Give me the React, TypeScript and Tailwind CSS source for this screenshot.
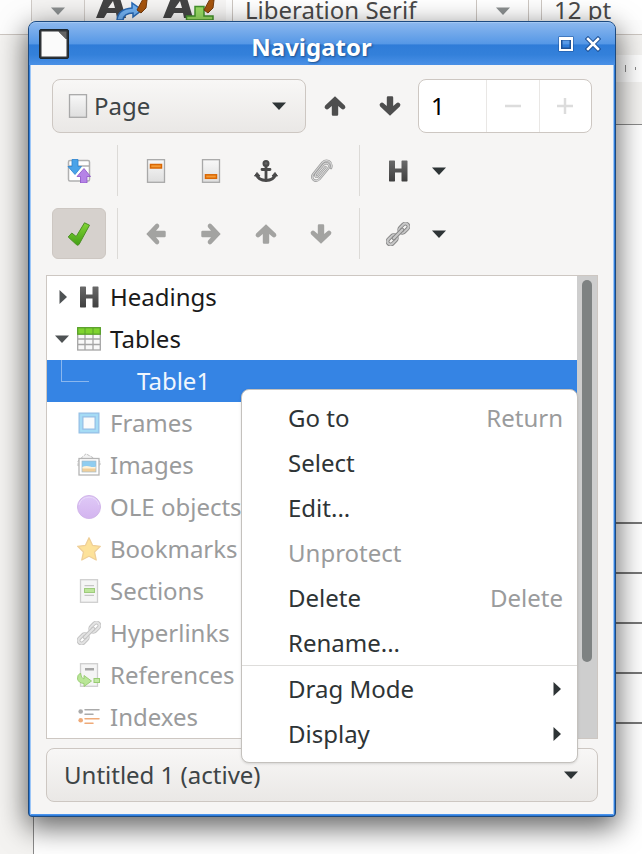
import React from "react";

type IconProps = { className?: string };

const dark = "#4a4a4a";

function CaretDown({ className = "" }: IconProps) {
  return (
    <svg viewBox="0 0 14 8" className={`h-2 w-[14px] shrink-0 ${className}`} aria-hidden="true">
      <path d="M0 0.5H14L7 8Z" fill="currentColor" />
    </svg>
  );
}

function CaretRight({ className = "" }: IconProps) {
  return (
    <svg viewBox="0 0 8 14" className={`h-[14px] w-2 shrink-0 ${className}`} aria-hidden="true">
      <path d="M0.5 0V14L8 7Z" fill="currentColor" />
    </svg>
  );
}

function Svg({ children, className = "" }: { children: React.ReactNode; className?: string }) {
  return (
    <svg viewBox="0 0 24 24" className={`size-6 shrink-0 ${className}`} fill="none" aria-hidden="true">
      {children}
    </svg>
  );
}

function Arrow({ className = "" }: IconProps) {
  return (
    <Svg className={className}>
      <path
        d="M12 2.300L21.800 11.500Q23.300 13.200 21.600 14.800Q20 16 18.400 14.800L15.200 12V20.500Q15.200 21.700 14 21.700H10Q8.800 21.700 8.800 20.500V12L5.600 14.800Q4 16 2.400 14.800Q0.700 13.200 2.200 11.500Z"
        fill="currentColor"
      />
    </Svg>
  );
}

function HeadingIcon() {
  return (
    <Svg>
      <defs>
        <linearGradient id="heading" x2="0" y2="1">
          <stop stopColor="#6a6a6a" />
          <stop offset="1" stopColor="#3f3f3f" />
        </linearGradient>
      </defs>
      <path
        d="M3.5 1.5H8.5L9 2V9.5H15.500V2L16 1.500H21L21.500 2V22L21 22.500H16L15.500 22V13.500H9V22L8.500 22.500H3.500L3 22V2Z"
        fill="url(#heading)"
      />
    </Svg>
  );
}

function AnchorIcon() {
  return (
    <Svg>
      <circle cx="12" cy="4.500" r="2.500" stroke={dark} strokeWidth="2" fill="#666" />
      <path d="M12 7V21M8 10.500H16" stroke={dark} strokeWidth="2.800" strokeLinecap="round" />
      <path d="M2.500 15.500Q4.500 21.300 12 21.500Q19.500 21.300 21.500 15.500" stroke={dark} strokeWidth="3" />
      <path d="M0.500 17L3 13.500L6 17ZM23.500 17L21 13.500L18 17Z" fill={dark} stroke={dark} strokeLinejoin="round" />
    </Svg>
  );
}

function ClipIcon() {
  const path = "M16.500 8L9 17Q8 18.500 6.800 17.500Q5.800 16.500 6.800 15L14.500 5.500Q17 3.200 19.200 5Q21.300 7 19.200 9.500L10.500 20Q7.500 23 4.500 20.700Q2 18.200 4.300 15L13.500 3.500Q16.500 0.500 20 2.300Q23.500 4.500 22 9";
  return (
    <Svg>
      <path d={path} stroke="#9a9a9a" strokeWidth="2.400" strokeLinecap="round" strokeLinejoin="round" />
      <path d={path} stroke="#d6d6d6" strokeWidth="1.100" strokeLinecap="round" strokeLinejoin="round" />
    </Svg>
  );
}

function ChainIcon({ className = "" }: IconProps) {
  return (
    <Svg className={className}>
      <g transform="rotate(-45 12 12)">
        <g stroke="#848484" strokeWidth="3.800">
          <rect x="-1.500" y="9" width="10.500" height="6" rx="3" />
          <rect x="15" y="9" width="10.500" height="6" rx="3" />
        </g>
        <g stroke="#c8c8c8" strokeWidth="2">
          <rect x="-1.500" y="9" width="10.500" height="6" rx="3" />
          <rect x="15" y="9" width="10.500" height="6" rx="3" />
        </g>
        <path d="M6 12H18" stroke="#848484" strokeWidth="4" strokeLinecap="round" />
        <path d="M6 12H18" stroke="#c8c8c8" strokeWidth="2.200" strokeLinecap="round" />
      </g>
    </Svg>
  );
}

function ContentViewIcon() {
  return (
    <Svg>
      <rect x="1.500" y="1.500" width="21" height="20.500" rx="1.500" fill="#fff" stroke="#b0b0b0" strokeWidth="1.500" />
      <path d="M2 7H22" stroke="#a5a5a5" strokeWidth="1.300" />
      <path d="M5 0.500H11V7.500H14.500L8 15.500L1 7.500H5Z" fill="#4aa3e8" stroke="#2b83cf" strokeWidth="0.800" />
      <path d="M13.500 24V17.500H10L17 9.500L23.500 17.500H20V24Z" fill="#b583e6" stroke="#8c50c4" strokeWidth="0.800" />
    </Svg>
  );
}

function PageIcon({ mark }: { mark?: "header" | "footer" }) {
  return (
    <Svg>
      <defs>
        <linearGradient id="sheet" x2="0" y2="1">
          <stop stopColor="#f8f8f8" />
          <stop offset="1" stopColor="#dedede" />
        </linearGradient>
      </defs>
      <rect x="3.500" y="0.700" width="17" height="22.600" fill="url(#sheet)" stroke="#a8a8a8" strokeWidth="1.300" />
      {mark && (
        <rect
          x="6.500"
          y={mark === "header" ? 5.5 : 15.8}
          width="11"
          height="3.500"
          fill="#f59a34"
          stroke="#d96704"
          strokeWidth="1.500"
        />
      )}
    </Svg>
  );
}

function CheckIcon() {
  return (
    <Svg>
      <defs>
        <linearGradient id="check" x2="0" y2="1">
          <stop stopColor="#83d435" />
          <stop offset="1" stopColor="#43a015" />
        </linearGradient>
      </defs>
      <path
        d="M17.500 0.800L22.500 3.200L12 22.500Q10.500 24 9.300 22.500L1.200 15L4.800 11L9.200 14.500Z"
        fill="url(#check)"
        stroke="#4c8f24"
        strokeWidth="1"
        strokeLinejoin="round"
      />
    </Svg>
  );
}

function TableIcon() {
  return (
    <Svg>
      <rect x="0.700" y="1" width="22.600" height="22" fill="#f8f8f8" stroke="#a5a5a5" strokeWidth="1.300" />
      <path d="M1 12H23M1 17.500H23M8 7V23M16 7V23" stroke="#a5a5a5" strokeWidth="1.300" />
      <rect x="0.700" y="0.700" width="22.600" height="6.500" fill="#80d330" stroke="#59a02a" strokeWidth="1.300" />
      <path d="M8 1V7M16 1V7" stroke="#59a02a" />
    </Svg>
  );
}

function FrameIcon() {
  return (
    <Svg>
      <rect x="4" y="4" width="16" height="16" fill="#fbfbfb" stroke="#a2cdf0" strokeWidth="4" />
      <rect x="2" y="2" width="20" height="20" stroke="#93bfe4" />
      <rect x="4" y="4" width="16" height="16" stroke="#a7e0f6" strokeWidth="1.500" />
      <rect x="6" y="6" width="12" height="12" stroke="#93bfe4" />
    </Svg>
  );
}

function ImageIcon() {
  return (
    <Svg>
      <path d="M1 8L9 0.800L23 8.500V12L1 13Z" fill="#f3f3f3" stroke="#c0c0c0" strokeDasharray="3 1" />
      <rect x="2" y="5.500" width="20" height="16.500" fill="#fff" stroke="#b5b5b5" strokeWidth="1.300" />
      <rect x="5" y="8" width="14" height="11" fill="#8fcdf0" />
      <path d="M5 14Q9 12.500 13 13.500Q16 14.500 19 13.500V16H5Z" fill="#fff3da" />
      <path d="M5 15.500H19V19H5Z" fill="#f0cf9b" />
      <rect x="5" y="8" width="14" height="11" stroke="#a3bac8" strokeWidth="0.700" />
    </Svg>
  );
}

function OleIcon() {
  return (
    <Svg>
      <defs>
        <linearGradient id="ole" x2="0" y2="1">
          <stop stopColor="#dfc9f7" />
          <stop offset="1" stopColor="#d3b4ef" />
        </linearGradient>
      </defs>
      <circle cx="12" cy="12" r="11.500" fill="url(#ole)" stroke="#d1b5e9" />
      <path d="M2 10Q4 2.500 12 2.200Q20 2.500 22 10" stroke="#e8d9fa" />
    </Svg>
  );
}

function StarIcon() {
  return (
    <Svg>
      <path
        d="M12 0.800L15.500 8.300L23.300 9.300L17.500 15L19.200 23L12 19.200L4.800 23L6.500 15L0.700 9.300L8.500 8.300Z"
        fill="#fde29a"
        stroke="#efcf98"
        strokeWidth="1.300"
        strokeLinejoin="round"
      />
    </Svg>
  );
}

function SectionIcon() {
  return (
    <Svg>
      <rect x="3.500" y="0.700" width="17" height="22.600" fill="#f5f5f5" stroke="#cfcfcf" strokeWidth="1.300" />
      <path d="M7.500 6.700H17M7.500 16.300H17" stroke="#bbb" />
      <rect x="7.500" y="9.500" width="10" height="4" fill="#bce59a" stroke="#9ecb7d" />
    </Svg>
  );
}

function ReferenceIcon() {
  return (
    <Svg>
      <rect x="3.500" y="0.700" width="17" height="22.600" fill="#f5f5f5" stroke="#cfcfcf" strokeWidth="1.300" />
      <rect x="8" y="5" width="9" height="2.500" fill="#a5a5a5" />
      <path
        d="M3.500 10Q0 12 0.500 16Q1.500 20 7 20.500V23.500L14.500 18L7 12.500V16Q4 15 4 12Z"
        fill="#b9e697"
        stroke="#96c96f"
        strokeWidth="0.900"
        strokeLinejoin="round"
      />
      <rect x="17" y="15.500" width="5.500" height="4" fill="#c2e8a4" stroke="#98cb73" />
    </Svg>
  );
}

function IndexIcon() {
  return (
    <Svg>
      <circle cx="3.700" cy="6.500" r="2.300" fill="#aaa" />
      <circle cx="3.700" cy="15.300" r="2.300" fill="#efaa78" />
      <path d="M8 4.800H22M8 9.300H16" stroke="#aaa" strokeWidth="1.500" strokeLinecap="round" />
      <path d="M8 13.700H22M8 18.300H16" stroke="#efaa78" strokeWidth="1.500" strokeLinecap="round" />
    </Svg>
  );
}

function DocumentLogo() {
  return (
    <svg viewBox="0 0 30 30" className="size-[30px] shrink-0" aria-hidden="true">
      <rect x="0.500" y="0.500" width="29" height="29" rx="1.500" fill="#303438" stroke="#1c2730" />
      <path d="M2.500 2.500H19.500L27.500 10.500V27.500H2.500Z" fill="#fbfbfb" />
      <path d="M19.500 2.500L27.500 10.500V2.500Z" fill="#666" />
    </svg>
  );
}

function StyleIcon({ kind }: { kind: "update" | "new" }) {
  return (
    <svg viewBox="0 0 54 20" className="h-5 w-[54px] shrink-0" aria-hidden="true">
      <path d="M0 18L8 -2H24L30 18H21L20 13H11L8 18ZM12 8H19L17 1Z" fill="#444" />
      {kind === "update" ? (
        <path d="M21 20Q22 9 36 8V3L46 10L37 17V13Q28 13 27 20Z" fill="#72b2f3" stroke="#2869b5" strokeWidth="1.500" />
      ) : (
        <path d="M23.500 20V16H32V6.500H41V16H50V20Z" fill="#98dc63" stroke="#43912b" strokeWidth="1.500" />
      )}
      <path d="M47 -1L51 0L50 8L45 13L41 10Z" fill="#a6540d" stroke="#743b0d" />
    </svg>
  );
}

function ToolButton({ label, children, className = "", disabled }: {
  label: string;
  children: React.ReactNode;
  className?: string;
  disabled?: boolean;
}) {
  return (
    <button
      type="button"
      aria-label={label}
      disabled={disabled}
      className={`flex h-[51px] w-[54px] shrink-0 items-center justify-center rounded-md text-[#4e4e4e] disabled:text-[#a3a3a1] ${className}`}
    >
      {children}
    </button>
  );
}

function Separator() {
  return <div className="mx-[10px] w-px self-stretch bg-[#dcdad7]" />;
}

const lists = [
  { name: "Frames", icon: <FrameIcon /> },
  { name: "Images", icon: <ImageIcon /> },
  { name: "OLE objects", icon: <OleIcon /> },
  { name: "Bookmarks", icon: <StarIcon /> },
  { name: "Sections", icon: <SectionIcon /> },
  { name: "Hyperlinks", icon: <ChainIcon className="opacity-50" /> },
  { name: "References", icon: <ReferenceIcon /> },
  { name: "Indexes", icon: <IndexIcon /> },
];

const actions = [
  { name: "Go to", hint: "Return" },
  { name: "Select" },
  { name: "Edit..." },
  { name: "Unprotect", disabled: true },
  { name: "Delete", hint: "Delete" },
  { name: "Rename..." },
];

function DocumentWindow() {
  return (
    <div className="flex h-full flex-col bg-[#f4f3f1]">
      <div className="flex h-[35px] shrink-0 items-start border-b border-[#cdc7c2] bg-[#fdfdfd] pl-[31px]">
        <button
          type="button"
          aria-label="Paragraph style list"
          className="flex h-[21px] w-[54px] shrink-0 items-center justify-center border-x border-[#d0cbc7] bg-[#f4f3f2] text-[#8b8f90]"
        >
          <CaretDown />
        </button>
        <div className="flex h-[21px] shrink-0 gap-[13px] bg-[#f6f5f4] pl-[11px] pr-[9px]">
          <StyleIcon kind="update" />
          <StyleIcon kind="new" />
        </div>
        <div className="ml-[6px] flex h-[21px] w-[297px] shrink-0 border-x border-[#cdc7c2] bg-white">
          <input
            aria-label="Font name"
            defaultValue="Liberation Serif"
            className="h-5 min-w-0 flex-1 bg-transparent pl-3 text-[#4a4a4a] outline-none"
          />
          <button
            type="button"
            aria-label="Font list"
            className="flex w-[52px] items-center justify-center border-l border-[#cdc7c2] text-[#8b8f90]"
          >
            <CaretDown />
          </button>
        </div>
        <input
          aria-label="Font size"
          defaultValue="12 pt"
          className="ml-3 h-5 min-w-0 flex-1 border-l border-[#cdc7c2] bg-white pl-3 text-[#4a4a4a] outline-none"
        />
      </div>
      <div className="ml-[33px] mt-5 flex h-[27px] shrink-0 items-center justify-end gap-[9px] bg-white pr-[6px]">
        <span className="h-[7px] w-px bg-[#8a8a8a]" />
        <span className="h-[3px] w-px bg-[#8a8a8a]" />
      </div>
      <div className="ml-[33px] mt-[42px] flex-1 border-l border-t border-[#8a8a8a] bg-white pt-[397px]">
        <div className="border-t-2 border-[#777]">
          {[0, 1, 2, 3].map((row) => (
            <div key={row} className="h-[50px] border-b-2 border-[#777]" />
          ))}
        </div>
      </div>
    </div>
  );
}

function ContextMenu() {
  return (
    <div
      role="menu"
      className="absolute bottom-[53px] right-[37px] w-[337px] rounded-lg border border-[#c4c1bd] bg-white pb-1.5 pt-[5px] text-[#2e3436] shadow-sm"
    >
      {actions.map((item) => (
        <button
          key={item.name}
          type="button"
          role="menuitem"
          disabled={item.disabled}
          className="flex h-[45px] w-full items-center justify-between pl-[46px] pr-[14px] disabled:text-[#9a9b9c]"
        >
          <span>{item.name}</span>
          {item.hint && <span className="text-[#9a9b9c]">{item.hint}</span>}
        </button>
      ))}
      <div className="h-px bg-[#dedddb]" />
      {["Drag Mode", "Display"].map((name) => (
        <button
          key={name}
          type="button"
          role="menuitem"
          className="flex h-[45px] w-full items-center justify-between pl-[46px] pr-4"
        >
          <span>{name}</span>
          <CaretRight />
        </button>
      ))}
    </div>
  );
}

function Navigator() {
  return (
    <section
      aria-label="Navigator"
      className="absolute left-7 right-[26px] top-[21px] rounded-t-lg rounded-b-sm border border-[#1d4a80] bg-[#2f7cd8] shadow-[0_9px_28px_2px_rgba(0,0,0,0.6)]"
    >
      <header className="flex h-[43px] items-center rounded-t-[7px] border-t border-[#a3c8f3] bg-[linear-gradient(#8ab7ee,#5597e6_50%,#2f7cd8_52%,#3380da_75%,#4a90e6)] px-[10px]">
        <DocumentLogo />
        <h1 className="flex-1 pt-1.5 text-center font-bold text-white [text-shadow:1px_1px_2px_#1d4f8c]">Navigator</h1>
        <button type="button" aria-label="Maximize" className="mr-[3px] flex size-6 items-center justify-center">
          <svg viewBox="0 0 16 16" className="size-4" fill="none" aria-hidden="true">
            <rect x="2.500" y="2.500" width="11" height="11" stroke="#1d5095" strokeWidth="4" />
            <path d="M2 2H14V14H2Z" stroke="#fff" strokeWidth="2" />
            <path d="M2 3H14" stroke="#fff" strokeWidth="2" />
          </svg>
        </button>
        <button type="button" aria-label="Close" className="flex size-6 items-center justify-center">
          <svg viewBox="0 0 16 16" className="size-4" fill="none" strokeLinecap="square" aria-hidden="true">
            <path d="M3 3L13 13M13 3L3 13" stroke="#1d5095" strokeWidth="4.500" />
            <path d="M3 3L13 13M13 3L3 13" stroke="#fff" strokeWidth="2.500" />
          </svg>
        </button>
      </header>

      <div className="mx-px mb-px border border-t-0 border-[#9cc6f7] border-b-[#4a93ec] bg-[#f6f5f4] px-[15px] pb-3 pt-[14px]">
        <div className="flex items-center gap-px px-[6px]">
          <div className="relative mr-px flex-1">
            <select
              aria-label="Navigate by"
              className="h-[54px] w-full appearance-none rounded-lg border border-[#cdc7c2] bg-linear-to-b from-[#f8f7f6] to-[#eae8e6] pl-[41px] text-[#3d4446]"
            >
              <option>Page</option>
            </select>
            <span className="pointer-events-none absolute inset-y-0 left-[14px] flex items-center">
              <PageIcon />
            </span>
            <CaretDown className="pointer-events-none absolute right-5 top-[23px] text-[#2e3436]" />
          </div>
          <ToolButton label="Previous page">
            <Arrow />
          </ToolButton>
          <ToolButton label="Next page">
            <Arrow className="rotate-180" />
          </ToolButton>
          <div className="flex h-[54px] w-[174px] overflow-hidden rounded-lg border border-[#cdc7c2] bg-white">
            <input
              aria-label="Page number"
              defaultValue="1"
              className="w-[67px] bg-transparent pl-3 text-black outline-none"
            />
            {["Decrease", "Increase"].map((label) => (
              <button
                key={label}
                type="button"
                aria-label={label}
                disabled
                className="flex flex-1 items-center justify-center border-l border-[#e9e7e5] text-[#dcdcdc]"
              >
                <svg viewBox="0 0 16 16" className="size-4" stroke="currentColor" strokeWidth="2.500" aria-hidden="true">
                  <path d={label === "Increase" ? "M0 8H16M8 0V16" : "M0 8H16"} />
                </svg>
              </button>
            ))}
          </div>
        </div>

        <div className="mt-3 flex items-center gap-px pl-[6px]">
          <ToolButton label="Toggle master view">
            <ContentViewIcon />
          </ToolButton>
          <Separator />
          <ToolButton label="Header">
            <PageIcon mark="header" />
          </ToolButton>
          <ToolButton label="Footer">
            <PageIcon mark="footer" />
          </ToolButton>
          <ToolButton label="Anchor and text">
            <AnchorIcon />
          </ToolButton>
          <ToolButton label="Set reminder">
            <ClipIcon />
          </ToolButton>
          <Separator />
          <ToolButton label="Heading levels shown">
            <HeadingIcon />
          </ToolButton>
          <button type="button" aria-label="Heading levels list" className="flex h-[51px] w-[26px] items-center justify-center text-[#2e3436]">
            <CaretDown />
          </button>
        </div>

        <div className="mt-3 flex items-center gap-px pl-[6px]">
          <ToolButton label="List box on or off" className="border border-[#cdc7c2] bg-[#d6d1cd]">
            <CheckIcon />
          </ToolButton>
          <Separator />
          <ToolButton label="Promote level" disabled>
            <Arrow className="-rotate-90" />
          </ToolButton>
          <ToolButton label="Demote level" disabled>
            <Arrow className="rotate-90" />
          </ToolButton>
          <ToolButton label="Promote chapter" disabled>
            <Arrow />
          </ToolButton>
          <ToolButton label="Demote chapter" disabled>
            <Arrow className="rotate-180" />
          </ToolButton>
          <Separator />
          <ToolButton label="Drag mode">
            <ChainIcon />
          </ToolButton>
          <button type="button" aria-label="Drag mode list" className="flex h-[51px] w-[26px] items-center justify-center text-[#2e3436]">
            <CaretDown />
          </button>
        </div>

        <div className="mt-4 flex border border-[#cdc7c2] bg-white">
          <ul role="tree" aria-label="Document contents" className="min-w-0 flex-1 text-[#1a1a1a]">
            <li role="treeitem" className="flex h-[42px] items-center pl-3">
              <CaretRight className="mr-[10px] text-[#4e5254]" />
              <HeadingIcon />
              <span className="pl-[9px]">Headings</span>
            </li>
            <li role="treeitem" className="flex h-[42px] items-center pl-2">
              <CaretDown className="mr-2 text-[#4e5254]" />
              <TableIcon />
              <span className="pl-[9px]">Tables</span>
            </li>
            <li role="treeitem" aria-selected="true" className="flex h-[42px] items-start bg-[#3584e4] pl-[14px] text-[#f0f6fd]">
              <span className="h-[22px] w-7 border-b border-l border-[#8ab7ee]" />
              <span className="pl-12 leading-[42px]">Table1</span>
            </li>
            {lists.map((item) => (
              <li key={item.name} role="treeitem" className="flex h-[42px] items-center pl-[30px] text-[#9a9b9c]">
                {item.icon}
                <span className="pl-[9px]">{item.name}</span>
              </li>
            ))}
          </ul>
          <div className="w-5 bg-[#cecece] px-[5px] pt-1">
            <div className="h-[382px] rounded-full bg-[#7e8282]" />
          </div>
        </div>

        <div className="relative mt-[9px]">
          <select
            aria-label="Open document"
            className="h-[54px] w-full appearance-none rounded-lg border border-[#cdc7c2] bg-linear-to-b from-[#f8f7f6] to-[#eae8e6] pl-[17px] text-[#3d4446]"
          >
            <option>Untitled 1 (active)</option>
          </select>
          <CaretDown className="pointer-events-none absolute right-5 top-[23px] text-[#2e3436]" />
        </div>
      </div>
      <ContextMenu />
    </section>
  );
}

export default function App() {
  return (
    <main className="relative h-screen min-h-[854px] overflow-hidden whitespace-nowrap font-['Noto_Sans',sans-serif] text-2xl">
      <DocumentWindow />
      <Navigator />
    </main>
  );
}
